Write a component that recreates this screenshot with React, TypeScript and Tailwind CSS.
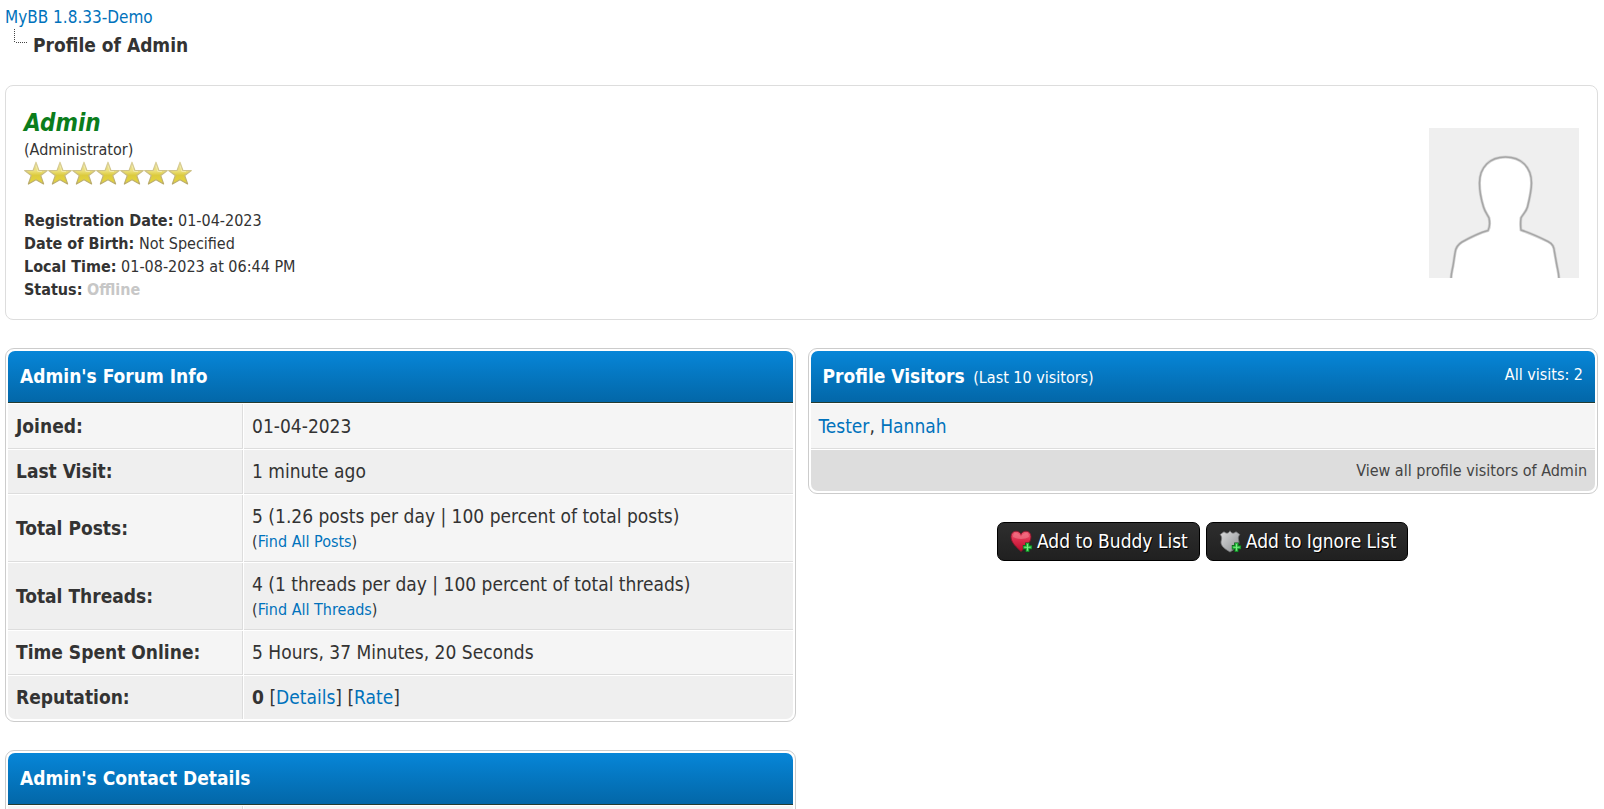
import type { ReactNode } from "react";

const stars = [0, 1, 2, 3, 4, 5, 6];

function Star() {
  return (
    <svg viewBox="0 0 24 24" className="h-6 w-6" aria-hidden="true">
      <defs>
        <linearGradient id="starFill" x1="0" y1="0" x2="0" y2="1">
          <stop offset="0" stopColor="#e6dc92" />
          <stop offset="0.4" stopColor="#ece07c" />
          <stop offset="0.6" stopColor="#dccb3e" />
          <stop offset="1" stopColor="#e6d73c" />
        </linearGradient>
        <linearGradient id="starEdge" x1="0" y1="0" x2="0" y2="1">
          <stop offset="0" stopColor="#dcd29c" />
          <stop offset="1" stopColor="#b8a968" />
        </linearGradient>
      </defs>
      <path
        d="M12 1.2 L14.8 9.3 L23.3 9.6 L16.8 14.6 L19.6 23 L12 18.8 L4.4 23 L7.2 14.6 L0.7 9.6 L9.2 9.3 Z"
        fill="url(#starFill)"
        stroke="url(#starEdge)"
        strokeWidth="1.2"
        strokeLinejoin="round"
      />
      <path d="M12 4.5 L13.8 10.4 L18 10.6" fill="none" stroke="#f4eeb4" strokeWidth="0.8" />
    </svg>
  );
}

function Avatar() {
  const body =
    "M22 152 C22 146 23 143 24 138 L26 125 C26.500 120 28 117 33 114 C41 109.500 50 105 59 102.500 C61 99 60.800 94 60 90 C58 86 56 84 54.500 79 C52 71 50.500 63 50.500 55 C50.500 39 61 29 76.500 29 C92 29 102.500 39 102.500 55 C102.500 63 100.500 71 98.500 79 C97 84 94 86 92 90 C91.500 94 91.500 98 92 102 C101 105 111 109.500 119 113.500 C124 116 125 119 125.500 124 L128 138 C129 143 130 146 130 152 Z";
  return (
    <svg viewBox="0 0 150 150" className="h-[150px] w-[150px] shrink-0 bg-[#efefef]" role="img" aria-label="Avatar">
      <path d={body} fill="#fff" stroke="#d6d6d6" strokeWidth="3" />
      <path d={body} fill="none" stroke="#a6a6a6" strokeWidth="1.500" />
    </svg>
  );
}

function Plus() {
  return (
    <>
      <path d="M17.500 12.500 V22 M12.800 17.300 H22.200" stroke="#0c5a18" strokeWidth="4.600" />
      <path d="M17.500 13 V21.600 M13.300 17.300 H21.700" stroke="#25b53c" strokeWidth="3" />
      <path d="M17.500 14 V20.600 M14.300 17.300 H20.700" stroke="#7cec83" strokeWidth="1" />
    </>
  );
}

function HeartIcon() {
  return (
    <svg viewBox="0 0 24 24" className="h-6 w-6" aria-hidden="true">
      <defs>
        <linearGradient id="heart" x1="0" y1="0" x2="0" y2="1">
          <stop offset="0" stopColor="#ee5a72" />
          <stop offset="0.45" stopColor="#dc2c4c" />
          <stop offset="1" stopColor="#b80c2c" />
        </linearGradient>
      </defs>
      <path
        d="M11 21.500 C7 17.500 1 13 1 6.800 C1 3 3.500 1.200 6 1.200 C8.500 1.200 10.300 2.600 11 4.400 C11.700 2.600 13.500 1.200 16 1.200 C18.500 1.200 21 3 21 6.800 C21 13 15 17.500 11 21.500 Z"
        fill="url(#heart)"
        stroke="#86152a"
        strokeWidth="0.9"
      />
      <path d="M3 7 C3 3.500 5 2.700 6.500 2.900 C9 3.200 10 5 11 6.600 C12 5 13 3.200 15.500 2.900 C17 2.700 19 3.500 19 7 C15 9.500 7 9.500 3 7 Z" fill="#f58a98" fillOpacity="0.5" />
      <Plus />
    </svg>
  );
}

function ShieldIcon() {
  return (
    <svg viewBox="0 0 24 24" className="h-6 w-6" aria-hidden="true">
      <defs>
        <linearGradient id="shield" x1="0" y1="0" x2="1" y2="1">
          <stop offset="0" stopColor="#dcdcdc" />
          <stop offset="0.5" stopColor="#b4b6b8" />
          <stop offset="1" stopColor="#8c8e90" />
        </linearGradient>
      </defs>
      <path
        d="M11 0.800 C12.300 3.400 14.500 4 17 1.800 L20.800 4.500 C18.500 7.500 19.500 9 20 12 C20.300 16.500 15 19.500 11 22 C7 19.500 1.700 16.500 2 12 C2.500 9 3.500 7.500 1.200 4.500 L5 1.800 C7.500 4 9.700 3.400 11 0.800 Z"
        fill="url(#shield)"
        stroke="#77797b"
        strokeWidth="0.8"
      />
      <Plus />
    </svg>
  );
}

function Link({ children }: { children: ReactNode }) {
  return (
    <a href="#" className="text-[#0072bc] hover:underline">
      {children}
    </a>
  );
}

function Panel({ children }: { children: ReactNode }) {
  return (
    <div className="rounded-[9px] border border-[#ccc] p-px">
      <table className="w-full border-separate border-spacing-px">{children}</table>
    </div>
  );
}

function PanelHead({ title, note, aside, span }: { title: string; note?: string; aside?: string; span?: number }) {
  return (
    <thead>
      <tr>
        <th
          colSpan={span}
          className="rounded-t-[7px] border-b border-[#263c30] bg-linear-to-b from-[#0786d8] to-[#0367a8] p-3 text-left leading-[27px] font-bold text-white"
        >
          <div className="flex items-start justify-between">
            <span>
              {title}
              {note && <span className="ml-1 text-base leading-none font-normal"> {note}</span>}
            </span>
            {aside && <span className="text-base leading-6 font-normal">{aside}</span>}
          </div>
        </th>
      </tr>
    </thead>
  );
}

function InfoRow({
  label,
  shade,
  first,
  last,
  children,
}: {
  label: string;
  shade?: boolean;
  first?: boolean;
  last?: boolean;
  children?: ReactNode;
}) {
  const tone = shade ? "bg-[#efefef]" : "bg-[#f5f5f5]";
  const line = last ? "" : "border-b";
  return (
    <tr className={first ? "leading-7" : ""}>
      <th
        scope="row"
        className={`w-[30%] border-r border-[#ddd] px-2 py-2 text-left font-bold ${tone} ${line} ${last ? "rounded-bl-[7px]" : ""}`}
      >
        {label}
      </th>
      <td className={`border-[#ddd] px-2 py-2 ${tone} ${line} ${last ? "rounded-br-[7px]" : ""}`}>{children}</td>
    </tr>
  );
}

function ActionButton({ icon, children }: { icon: ReactNode; children: ReactNode }) {
  return (
    <button
      type="button"
      className="flex h-[39px] items-center gap-[3px] rounded-[7px] border border-black bg-linear-to-b from-[#2e2e2e] to-[#202020] pr-[11px] pl-3 text-white [text-shadow:1px_1px_0_#000]"
    >
      {icon}
      <span>{children}</span>
    </button>
  );
}

export default function App() {
  return (
    <div className="h-screen overflow-hidden bg-white pt-[5px] pr-[6px] pl-[5px] font-['DejaVu_Sans_Condensed','DejaVu_Sans',sans-serif] text-[19px] leading-[27px] text-[#333]">
      <nav>
        <div className="text-[17px] leading-6">
          <Link>MyBB 1.8.33-Demo</Link>
        </div>
        <div className="flex items-start gap-[5px] pl-2">
          <svg viewBox="0 0 15 14" className="h-[14px] w-[15px]" shapeRendering="crispEdges" aria-hidden="true">
            <path d="M1.500 0 V14 M3 13.500 H15" fill="none" stroke="#444" strokeWidth="1" strokeDasharray="1 1" />
          </svg>
          <h1 className="pt-1 leading-6 font-bold">Profile of Admin</h1>
        </div>
      </nav>

      <section className="mt-7 flex justify-between rounded-lg border border-[#ddd] px-[18px] pt-[22px] pb-[18px] text-base leading-[23px]">
        <div>
          <h2 className="text-2xl leading-[30px] font-bold text-[#0b7d1c] italic">Admin</h2>
          <div>(Administrator)</div>
          <div className="flex">
            {stars.map((n) => (
              <Star key={n} />
            ))}
          </div>
          <dl className="mt-6">
            <div>
              <dt className="inline font-bold">Registration Date:</dt> <dd className="inline">01-04-2023</dd>
            </div>
            <div>
              <dt className="inline font-bold">Date of Birth:</dt> <dd className="inline">Not Specified</dd>
            </div>
            <div>
              <dt className="inline font-bold">Local Time:</dt> <dd className="inline">01-08-2023 at 06:44 PM</dd>
            </div>
            <div>
              <dt className="inline font-bold">Status:</dt> <dd className="inline font-bold text-[#c7c7c7]">Offline</dd>
            </div>
          </dl>
        </div>
        <div className="pt-5">
          <Avatar />
        </div>
      </section>

      <main className="mt-7 grid grid-cols-2 items-start gap-3">
        <div className="flex flex-col gap-7">
          <Panel>
            <PanelHead title="Admin's Forum Info" span={2} />
            <tbody>
              <InfoRow label="Joined:" first>
                01-04-2023
              </InfoRow>
              <InfoRow label="Last Visit:" shade>
                1 minute ago
              </InfoRow>
              <InfoRow label="Total Posts:">
                <div>5 (1.26 posts per day | 100 percent of total posts)</div>
                <div className="text-base leading-[23px]">
                  (<Link>Find All Posts</Link>)
                </div>
              </InfoRow>
              <InfoRow label="Total Threads:" shade>
                <div>4 (1 threads per day | 100 percent of total threads)</div>
                <div className="text-base leading-[23px]">
                  (<Link>Find All Threads</Link>)
                </div>
              </InfoRow>
              <InfoRow label="Time Spent Online:">5 Hours, 37 Minutes, 20 Seconds</InfoRow>
              <InfoRow label="Reputation:" shade last>
                <strong>0</strong> [<Link>Details</Link>] [<Link>Rate</Link>]
              </InfoRow>
            </tbody>
          </Panel>
          <Panel>
            <PanelHead title="Admin's Contact Details" span={2} />
            <tbody>
              <InfoRow label="" first />
            </tbody>
          </Panel>
        </div>

        <div className="flex flex-col gap-7">
          <Panel>
            <PanelHead title="Profile Visitors" note="(Last 10 visitors)" aside="All visits: 2" />
            <tbody>
              <tr className="leading-7">
                <td className="border-b border-[#ddd] bg-[#f5f5f5] p-2">
                  <Link>Tester</Link>, <Link>Hannah</Link>
                </td>
              </tr>
            </tbody>
            <tfoot>
              <tr>
                <td className="rounded-b-[7px] bg-[#ddd] p-2 text-right text-base leading-[25px] text-[#444]">
                  <a href="#">View all profile visitors of Admin</a>
                </td>
              </tr>
            </tfoot>
          </Panel>
          <div className="flex justify-center gap-[6px]">
            <ActionButton icon={<HeartIcon />}>Add to Buddy List</ActionButton>
            <ActionButton icon={<ShieldIcon />}>Add to Ignore List</ActionButton>
          </div>
        </div>
      </main>
    </div>
  );
}
